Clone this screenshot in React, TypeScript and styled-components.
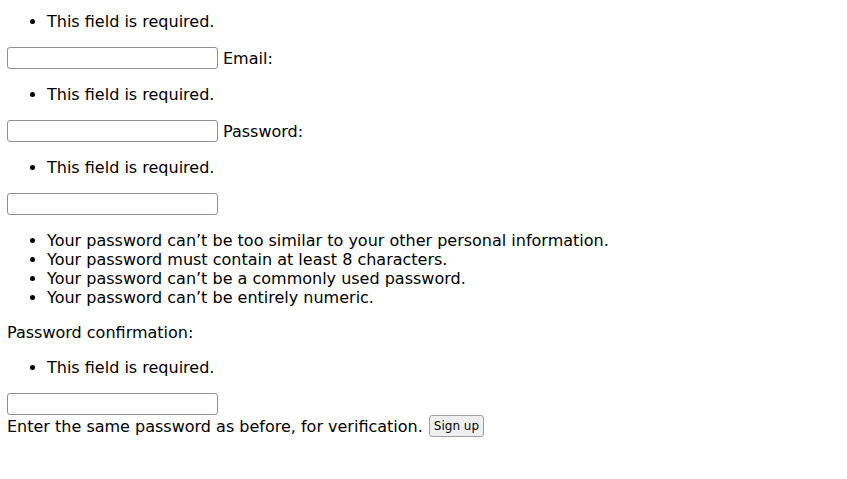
import styled, { createGlobalStyle } from 'styled-components';

const GlobalStyle = createGlobalStyle`
    html, body {
        margin: 0;
        background: #ffffff;
    }

    body {
        font-family: "DejaVu Sans", sans-serif;
        font-size: 16px;
        color: #000000;
    }
`;

const Form = styled.form`
    padding: 12px 8px 0 7px;
    line-height: 19px;
`;

const ErrorList = styled.ul<{ $top?: number }>`
    margin: ${ ({ $top }) => $top ?? 0 }px 0 16px;
    padding-left: 40px;
    list-style: disc;

    li {
        line-height: 19px;
    }
`;

const FieldRow = styled.p`
    margin: 0;
    display: flex;
    align-items: center;
    gap: 5px;
    height: 22px;
`;

const TextInput = styled.input`
    box-sizing: border-box;
    width: 211px;
    height: 22px;
    margin: 0;
    padding: 1px 2px;
    border: 1px solid #8f8f9d;
    border-radius: 3px;
    background: #ffffff;
    font-family: "DejaVu Sans", sans-serif;
    font-size: 13px;
`;

const Label = styled.label`
    font-size: 16px;
    line-height: 19px;
`;

const BlockLabel = styled.label`
    display: block;
    margin-top: 16px;
    line-height: 19px;
`;

const HelpText = styled.span`
    font-size: 16px;
`;

const FooterRow = styled.div`
    display: flex;
    align-items: center;
    gap: 6px;
    height: 22px;
`;

const SubmitButton = styled.button`
    box-sizing: border-box;
    height: 22px;
    padding: 0 4px;
    margin: 0;
    border: 1px solid #a0a0a8;
    border-radius: 3px;
    background: #efeff1;
    font-family: "DejaVu Sans", sans-serif;
    font-size: 12px;
    line-height: 20px;
    white-space: nowrap;
    color: #000000;
`;

const required = 'This field is required.';

const passwordHelp = [
    'Your password can’t be too similar to your other personal information.',
    'Your password must contain at least 8 characters.',
    'Your password can’t be a commonly used password.',
    'Your password can’t be entirely numeric.',
];

export default function App() {
    return (
        <>
            <GlobalStyle />
            <Form>
                <ErrorList>
                    <li>{ required }</li>
                </ErrorList>
                <FieldRow>
                    <TextInput type="text" name="username" />
                    <Label htmlFor="id_email">Email:</Label>
                </FieldRow>
                <ErrorList $top={ 16 }>
                    <li>{ required }</li>
                </ErrorList>
                <FieldRow>
                    <TextInput type="email" id="id_email" />
                    <Label htmlFor="id_password1">Password:</Label>
                </FieldRow>
                <ErrorList $top={ 16 }>
                    <li>{ required }</li>
                </ErrorList>
                <FieldRow>
                    <TextInput type="password" id="id_password1" />
                </FieldRow>
                <ErrorList $top={ 16 }>
                    {
                        passwordHelp.map((text) => (
                            <li key={ text }>{ text }</li>
                        ))
                    }
                </ErrorList>
                <BlockLabel htmlFor="id_password2">Password confirmation:</BlockLabel>
                <ErrorList $top={ 16 }>
                    <li>{ required }</li>
                </ErrorList>
                <FieldRow>
                    <TextInput type="password" id="id_password2" />
                </FieldRow>
                <FooterRow>
                    <HelpText>Enter the same password as before, for verification.</HelpText>
                    <SubmitButton type="submit">Sign up</SubmitButton>
                </FooterRow>
            </Form>
        </>
    );
}
